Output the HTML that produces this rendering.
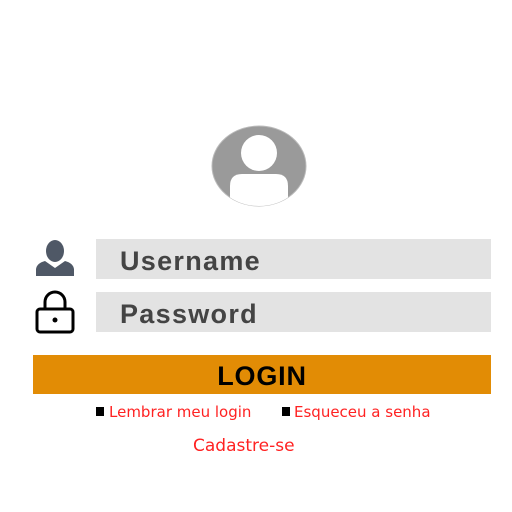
<!DOCTYPE html>
<html><head><style>
body{margin:0;width:512px;height:512px;background:#fff;position:relative;overflow:hidden;font-family:"Liberation Sans",sans-serif}
.a{position:absolute}
.inp{position:absolute;left:96px;width:395px;height:40px;background:#e3e3e3;font-weight:bold;font-size:27px;color:#444;line-height:44px;padding-left:24px;box-sizing:border-box;letter-spacing:1.3px}
.lk{position:absolute;font-family:"DejaVu Sans",sans-serif;font-size:15px;color:#f22}
.sq{position:absolute;width:8px;height:9px;background:#000}
</style></head><body>
<svg class="a" style="left:209px;top:124px" width="100" height="84" viewBox="0 0 100 84">
<defs><clipPath id="c"><ellipse cx="50" cy="42" rx="47" ry="40"/></clipPath></defs>
<ellipse cx="50" cy="42" rx="47" ry="40" fill="#9a9a9a" stroke="#bbb" stroke-width="1"/>
<g clip-path="url(#c)" fill="#fff">
<circle cx="50" cy="29" r="18"/>
<path d="M21 84 V62 Q21 50 33 50 H67 Q79 50 79 62 V84 Z"/>
</g>
</svg>
<svg class="a" style="left:35px;top:238px" width="40" height="40" viewBox="0 0 40 40">
<ellipse cx="20" cy="13" rx="9" ry="11" fill="#4f5866"/>
<path d="M1 38 V31 Q2 25 10 23 L20 30 L30 23 Q38 25 39 31 V38 Z" fill="#4f5866"/>
</svg>
<svg class="a" style="left:33px;top:290px" width="44" height="44" viewBox="0 0 44 44">
<path d="M12 19 V12 A10 10 0 0 1 32 12 V19" fill="none" stroke="#000" stroke-width="3"/>
<rect x="4" y="19" width="36" height="23" rx="3" fill="none" stroke="#000" stroke-width="3"/>
<circle cx="22" cy="30" r="2.5" fill="#000"/>
</svg>
<div class="inp" style="top:239px">Username</div>
<div class="inp" style="top:292px">Password</div>
<div class="a" style="left:33px;top:355px;width:458px;height:39px;background:#e28c05;text-align:center;font-weight:bold;font-size:27px;line-height:42px;color:#000;letter-spacing:0.8px">LOGIN</div>
<div class="sq" style="left:96px;top:407px"></div>
<div class="lk" style="left:109px;top:403px">Lembrar meu login</div>
<div class="sq" style="left:282px;top:407px"></div>
<div class="lk" style="left:294px;top:403px">Esqueceu a senha</div>
<div class="lk" style="left:193px;top:436px;font-size:17px">Cadastre-se</div>
</body></html>
